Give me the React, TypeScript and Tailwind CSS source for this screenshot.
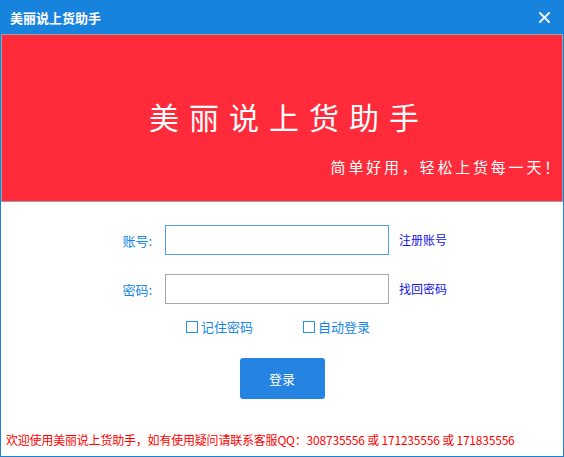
import React from "react";

const cjk = { fontFamily: '"Noto Sans CJK SC", "Noto Sans", sans-serif' };

export default function App() {
  return (
    <div
      className="w-[564px] h-[457px] bg-[#1883dc] flex flex-col overflow-hidden"
      style={cjk}
    >
      <div className="h-[34px] flex items-center justify-between pl-[10px] pr-[14px] shrink-0">
        <span className="text-white text-[13px] font-bold leading-none">美丽说上货助手</span>
        <svg width="11" height="11" viewBox="0 0 11 11" className="mt-[1px]">
          <path d="M1 1 L10 10 M10 1 L1 10" stroke="#e8f1fb" strokeWidth="2" strokeLinecap="square" />
        </svg>
      </div>
      <div className="flex-1 ml-[1px] mr-[1px] mb-[1px] bg-white flex flex-col">
        <div className="h-[168px] border border-[#a0a0a0] bg-[#ff2a3a] flex flex-col shrink-0">
          <div className="pt-[66px] flex justify-center pl-[14px]">
            <span className="text-white text-[30px] leading-[30px] tracking-[10px] font-normal">
              美丽说上货助手
            </span>
          </div>
          <div className="mt-[28px] flex justify-end pr-0">
            <span className="text-white text-[15px] leading-[15px] tracking-[2.8px]">
              简单好用，轻松上货每一天！
            </span>
          </div>
        </div>

        <div className="mt-[23px] flex items-center">
          <span className="w-[151px] text-right text-[13px] text-[#1487e6] leading-none">账号:</span>
          <div className="ml-[13px] w-[224px] h-[30px] border border-[#5a9be6] bg-white" />
          <span className="ml-[10px] text-[12px] text-[#1414e6] leading-none">注册账号</span>
        </div>
        <div className="mt-[19px] flex items-center">
          <span className="w-[151px] text-right text-[13px] text-[#1487e6] leading-none">密码:</span>
          <div className="ml-[13px] w-[224px] h-[30px] border border-[#a8a8a8] bg-white" />
          <span className="ml-[10px] text-[12px] text-[#1414e6] leading-none">找回密码</span>
        </div>

        <div className="mt-[16px] flex items-center h-[13px]">
          <div className="ml-[185px] flex items-center">
            <span className="w-[12px] h-[12px] border-[1.5px] border-[#2a90ea]" />
            <span className="ml-[3px] text-[13px] text-[#1487e6] leading-none">记住密码</span>
          </div>
          <div className="ml-[50px] flex items-center">
            <span className="w-[12px] h-[12px] border-[1.5px] border-[#2a90ea]" />
            <span className="ml-[3px] text-[13px] text-[#1487e6] leading-none">自动登录</span>
          </div>
        </div>

        <div className="mt-[25px] flex justify-center">
          <button className="w-[85px] h-[41px] bg-[#2583e2] rounded-[3px] text-white text-[13px] flex items-center justify-center">
            登录
          </button>
        </div>

        <div className="mt-auto mb-[10px] pl-[5px] text-[12px] leading-none text-[#ff0000] tracking-[-0.2px] whitespace-nowrap">
          欢迎使用美丽说上货助手，如有使用疑问请联系客服QQ：308735556 或 171235556 或 171835556
        </div>
      </div>
    </div>
  );
}
